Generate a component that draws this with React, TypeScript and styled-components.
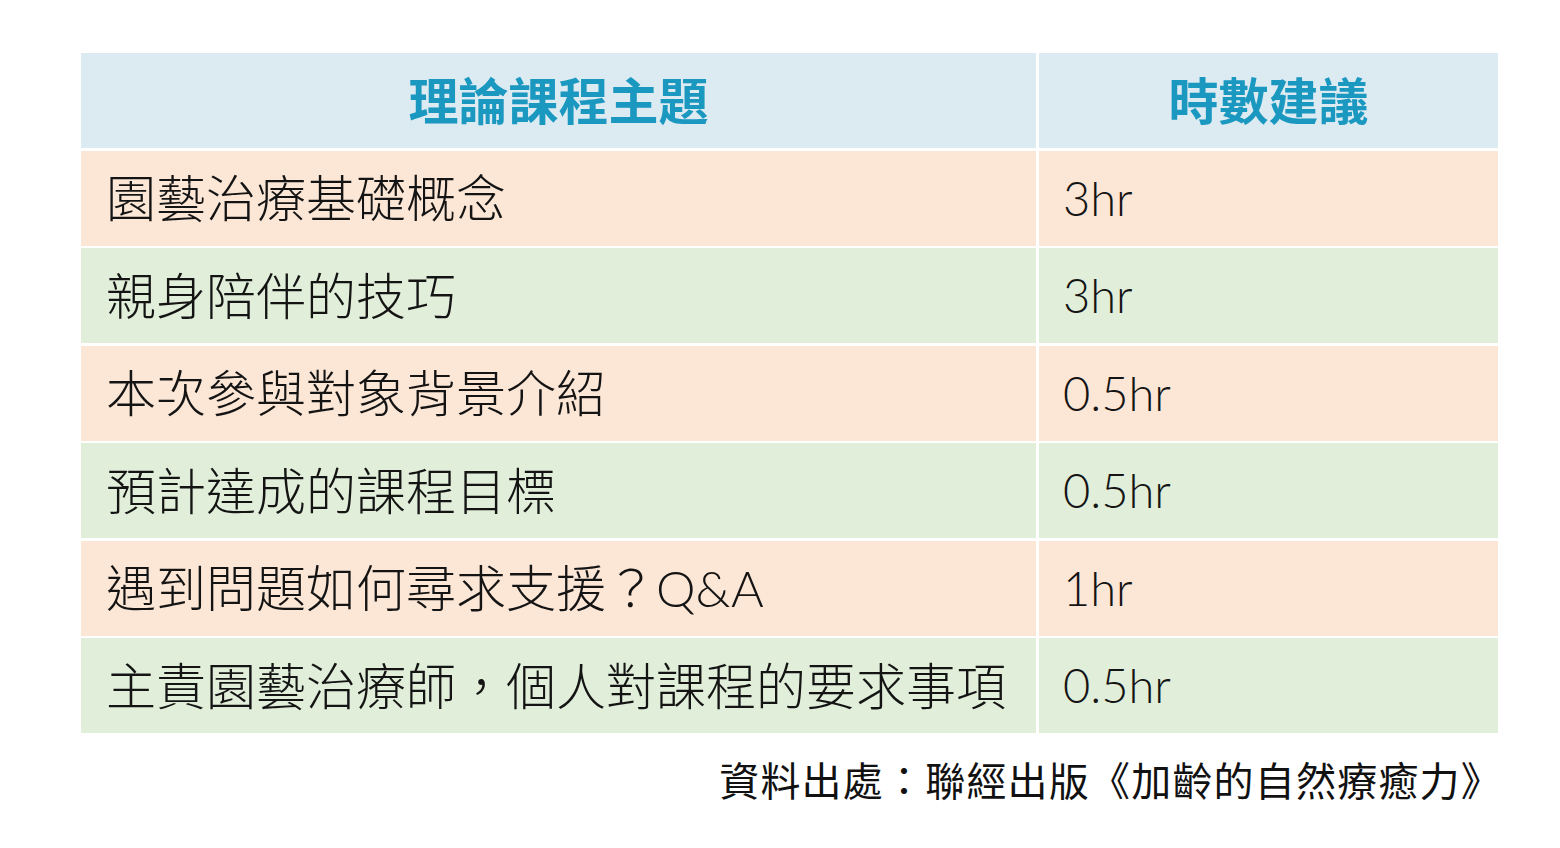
import React from "react";
import styled, { createGlobalStyle } from "styled-components";

const GlobalStyle = createGlobalStyle`
  html, body {
    margin: 0;
    padding: 0;
    background: #ffffff;
  }
  body {
    font-family: "Lato", "Noto Sans CJK TC", sans-serif;
  }
`;

const Page = styled.div`
  width: 1560px;
  height: 848px;
  padding: 53px 0 0 81px;
  box-sizing: border-box;
  background: #ffffff;
`;

const Wrapper = styled.div`
  width: 1417px;
  display: flex;
  flex-direction: column;
`;

const Table = styled.div`
  display: grid;
  grid-template-columns: 955px 459px;
  grid-auto-rows: 95px;
  column-gap: 3px;
  row-gap: 2.5px;
  background: #ffffff;
`;

type Tone = "head" | "peach" | "green";

const bg: Record<Tone, string> = {
  head: "#dceaf2",
  peach: "#fce6d6",
  green: "#e1eed9",
};

const Cell = styled.div<{ $tone: Tone }>`
  background: ${(p) => bg[p.$tone]};
  display: flex;
  align-items: center;
  padding: 0 24px;
  box-sizing: border-box;
  font-family: "Lato", "Noto Sans CJK TC", sans-serif;
  font-size: 50px;
  font-weight: 300;
  color: #141414;
  white-space: nowrap;
  line-height: 1;
`;

const HeadCell = styled(Cell)`
  justify-content: center;
  font-family: "Noto Sans CJK TC", sans-serif;
  font-weight: 700;
  color: #1b98c0;
  padding-bottom: 6px;
`;

const TopicText = styled.span`
  font-family: "Lato", "Noto Sans CJK TC", sans-serif;
  font-weight: 300;
  padding-left: 1px;
`;

const HoursText = styled.span`
  font-family: "Lato", sans-serif;
  font-weight: 300;
  font-size: 47px;
`;

const Source = styled.div`
  margin-top: 26px;
  margin-right: -4px;
  text-align: right;
  font-family: "Noto Sans CJK TC", serif;
  font-size: 40px;
  font-weight: 400;
  letter-spacing: 1.2px;
  line-height: 40px;
  color: #111111;
`;

const rows: { topic: string; hours: string }[] = [
  { topic: "園藝治療基礎概念", hours: "3hr" },
  { topic: "親身陪伴的技巧", hours: "3hr" },
  { topic: "本次參與對象背景介紹", hours: "0.5hr" },
  { topic: "預計達成的課程目標", hours: "0.5hr" },
  { topic: "遇到問題如何尋求支援？Q&A", hours: "1hr" },
  { topic: "主責園藝治療師，個人對課程的要求事項", hours: "0.5hr" },
];

export default function App() {
  return (
    <>
      <GlobalStyle />
      <Page>
        <Wrapper>
          <Table>
            <HeadCell $tone="head">理論課程主題</HeadCell>
            <HeadCell $tone="head">時數建議</HeadCell>
            {rows.map((r, i) => {
              const tone: Tone = i % 2 === 0 ? "peach" : "green";
              return (
                <React.Fragment key={r.topic}>
                  <Cell $tone={tone}>
                    <TopicText>{r.topic}</TopicText>
                  </Cell>
                  <Cell $tone={tone}>
                    <HoursText>{r.hours}</HoursText>
                  </Cell>
                </React.Fragment>
              );
            })}
          </Table>
          <Source>資料出處：聯經出版《加齡的自然療癒力》</Source>
        </Wrapper>
      </Page>
    </>
  );
}
